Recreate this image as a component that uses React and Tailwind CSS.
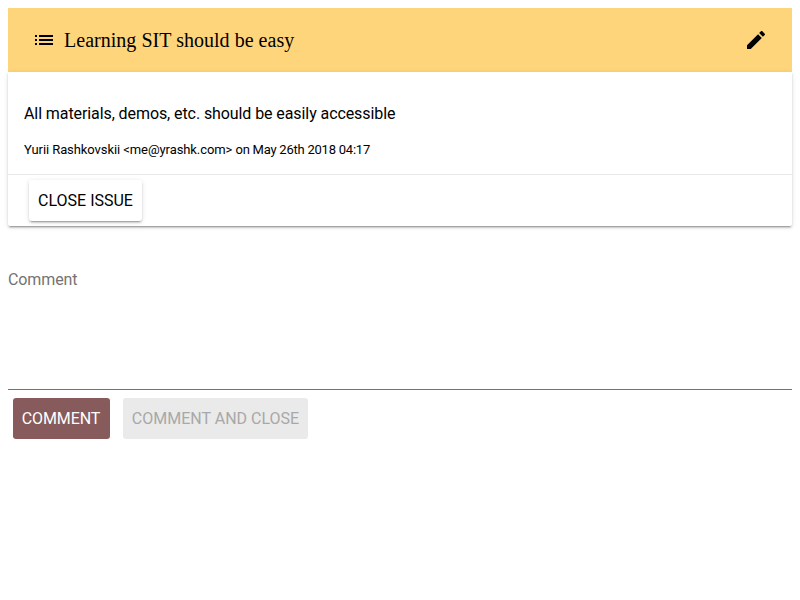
const ListIcon = () => (
  <svg viewBox="0 0 24 24" className="block size-6 fill-black">
    <path d="M3 13h2v-2H3v2zm0 4h2v-2H3v2zm0-8h2V7H3v2zm4 4h14v-2H7v2zm0 4h14v-2H7v2zM7 7v2h14V7H7z" />
  </svg>
);

const EditIcon = () => (
  <svg viewBox="0 0 24 24" className="block size-6 fill-black">
    <path d="M3 17.25V21h3.75L17.81 9.94l-3.75-3.75L3 17.25zM20.71 7.04c.39-.39.39-1.02 0-1.41l-2.34-2.34c-.39-.39-1.02-.39-1.41 0l-1.83 1.83 3.75 3.75 1.83-1.83z" />
  </svg>
);

export default function App() {
  return (
    <div className="h-[600px] bg-white p-2 font-[Roboto,sans-serif] text-base text-black">
      <header className="flex h-16 items-center bg-[#ffd57b] px-4">
        <button className="p-2"><ListIcon /></button>
        <h1 className="flex-1 font-['Liberation_Serif',serif] text-xl tracking-[0.025px]">Learning SIT should be easy</h1>
        <button className="p-2"><EditIcon /></button>
      </header>
      <section className="h-[154px] rounded-b-[2px] shadow-[0_2px_2px_0_rgba(0,0,0,0.14),0_1px_5px_0_rgba(0,0,0,0.12),0_3px_1px_-2px_rgba(0,0,0,0.2)]">
        <div className="h-[102px] px-4 pt-[30px]">
          <p className="leading-6 tracking-[-0.087px]">All materials, demos, etc. should be easily accessible</p>
          <p className="mt-3.5 text-[13px] leading-5 tracking-[-0.08px]">
            Yurii Rashkovskii &lt;me@yrashk.com&gt;{" "}
            <span className="tracking-[-0.23px]">on May 26th 2018 04:17</span>
          </p>
        </div>
        <div className="h-[52px] border-t border-[#e8e8e8] px-[21px] py-[5px]">
          <button className="h-[41px] w-[113px] rounded-[3px] bg-white shadow-[0_2px_2px_0_rgba(0,0,0,0.14),0_1px_5px_0_rgba(0,0,0,0.12),0_3px_1px_-2px_rgba(0,0,0,0.2)]">CLOSE ISSUE</button>
        </div>
      </section>
      <div className="mt-[34px] h-[130px] border-b border-[#737373] pt-2 leading-6 tracking-[-0.1px] text-[#737373]">Comment</div>
      <div className="flex gap-[13px] px-[5px] pt-2">
        <button className="h-[41px] w-[97px] rounded-[3px] bg-[#875b5b] pr-px tracking-[-0.1px] text-white">COMMENT</button>
        <button className="h-[41px] w-[185px] rounded-[3px] bg-[#eaeaea] text-[#a8a8a8]">COMMENT AND CLOSE</button>
      </div>
    </div>
  );
}
